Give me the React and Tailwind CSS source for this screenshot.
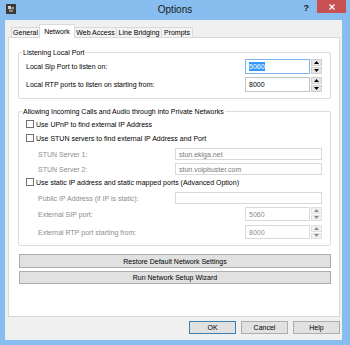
import React from "react";

function Tri({ up, color = "#000" }) {
  return (
    <svg width="5" height="3" viewBox="0 0 5 3" className="block">
      {up ? <polygon points="0,3 5,3 2.5,0" fill={color} /> : <polygon points="0,0 5,0 2.5,3" fill={color} />}
    </svg>
  );
}

function Spin({ value, selected, focused, disabled, h = "h-[15px]" }) {
  return (
    <div className={`flex ${h} w-[77px] shrink-0`}>
      <div
        className={`flex-1 flex items-center pl-[3px] border bg-white ${
          focused ? "border-[#7eb4ea]" : disabled ? "border-[#d9d9d9]" : "border-[#c4c4c4]"
        } ${disabled ? "text-[#8d8d8d]" : "text-black"}`}
      >
        {selected ? <span className="bg-[#3399ff] text-white leading-[9px]">{value}</span> : value}
      </div>
      <div className="w-[11px] ml-px flex flex-col gap-px">
        <div className={`flex-1 flex items-center justify-center border ${disabled ? "border-[#e0e0e0] bg-[#f2f2f2]" : "border-[#cfcfcf] bg-[#e6e6e6]"}`}>
          <Tri up color={disabled ? "#8d8d8d" : "#000"} />
        </div>
        <div className={`flex-1 flex items-center justify-center border ${disabled ? "border-[#e0e0e0] bg-[#f2f2f2]" : "border-[#cfcfcf] bg-[#e6e6e6]"}`}>
          <Tri color={disabled ? "#8d8d8d" : "#000"} />
        </div>
      </div>
    </div>
  );
}

function Check({ label, className = "" }) {
  return (
    <div className={`flex items-center h-[12px] gap-[2px] ${className}`}>
      <div className="w-[8px] h-[8px] border border-[#707070] bg-white" />
      <span>{label}</span>
    </div>
  );
}

function TextInput({ value }) {
  return (
    <div className="w-[147px] h-[12px] border border-[#d9d9d9] bg-white flex items-center pl-[3px] text-[#7a7a7a]">
      {value}
    </div>
  );
}

export default function App() {
  return (
    <div className="w-[350px] h-[345px] bg-[#88bdef] flex flex-col font-['Liberation_Sans',Arial,sans-serif] text-[7px] text-black leading-none overflow-hidden">
      {/* Title bar */}
      <div className="h-[20px] grid grid-cols-[1fr_auto_1fr] items-start shrink-0">
        <div className="pl-[6px] pt-[4px]">
          <svg width="10" height="10" viewBox="0 0 10 10" className="block">
            <rect width="10" height="10" fill="#3b3b3b" />
            <rect x="2" y="2" width="3" height="3" fill="#cfcfcf" />
            <rect x="5.5" y="3" width="2.5" height="2" fill="#9a9a9a" />
            <rect x="3" y="5.5" width="4" height="2.5" fill="#8a8a8a" />
          </svg>
        </div>
        <div className="pt-[5px] text-[10px] text-[#1a1a1a] leading-[10px]">Options</div>
        <div className="flex justify-end items-start">
          <span className="pt-[4px] mr-[8px] text-[9px] font-bold text-[#1a1a1a] leading-[9px]">?</span>
          <div className="w-[29px] h-[13px] mr-[4px] bg-[#c75050] flex items-center justify-center">
            <svg width="6" height="6" viewBox="0 0 6 6" className="block">
              <path d="M0.5 0.5 L5.5 5.5 M5.5 0.5 L0.5 5.5" stroke="#fff" strokeWidth="1.3" />
            </svg>
          </div>
        </div>
      </div>

      {/* Client */}
      <div className="ml-[5px] mr-[8px] h-[320px] bg-[#f0f0f0] pl-[3px] pr-[2px] pt-[4px] flex flex-col">
        {/* Tabs */}
        <div className="h-[13px] flex items-end pl-[3px]">
          <div className="w-[29px] h-[10px] border border-b-0 border-[#d9d9d9] bg-[#f3f3f3] flex items-center justify-center">General</div>
          <div className="w-[36px] h-[14px] -mb-px -ml-px relative z-10 border border-b-0 border-[#d9d9d9] bg-white flex items-center justify-center pb-[1px]">Network</div>
          <div className="w-[43px] h-[10px] -ml-px border border-b-0 border-[#d9d9d9] bg-[#f3f3f3] flex items-center justify-center">Web Access</div>
          <div className="w-[46px] h-[10px] -ml-px border border-b-0 border-[#d9d9d9] bg-[#f3f3f3] flex items-center justify-center">Line Bridging</div>
          <div className="w-[32px] h-[10px] -ml-px border border-b-0 border-[#d9d9d9] bg-[#f3f3f3] flex items-center justify-center">Prompts</div>
        </div>

        {/* Panel */}
        <div className="h-[280px] border border-[#d9d9d9] bg-white pl-[9px] pr-[8px] pt-[10px] flex flex-col">
          <fieldset className="border border-[#dcdcdc] rounded-[2px] pl-[7px] pr-[8px] pt-[2px] pb-[6px] flex flex-col gap-[3px]">
            <legend className="ml-[-4px] px-[1px] leading-[9px]">Listening Local Port</legend>
            <div className="h-[15px] flex items-center justify-between">
              <span>Local Sip Port to listen on:</span>
              <Spin value="5060" selected focused />
            </div>
            <div className="h-[15px] flex items-center justify-between">
              <span>Local RTP ports to listen on starting from:</span>
              <Spin value="8000" />
            </div>
          </fieldset>

          <fieldset className="mt-[8px] border border-[#dcdcdc] rounded-[2px] pl-[7px] pr-[8px] pt-[2px] pb-[6px] flex flex-col">
            <legend className="ml-[-4px] px-[1px] leading-[9px]">Allowing Incoming Calls and Audio through into Private Networks</legend>
            <Check label="Use UPnP to find external IP Address" />
            <Check label="Use STUN servers to find external IP Address and Port" className="mt-[2px]" />
            <div className="mt-[4px] h-[12px] flex items-center justify-between pl-[12px] text-[#8d8d8d]">
              <span>STUN Server 1:</span>
              <TextInput value="stun.ekiga.net" />
            </div>
            <div className="mt-[3px] h-[12px] flex items-center justify-between pl-[12px] text-[#8d8d8d]">
              <span>STUN Server 2:</span>
              <TextInput value="stun.voipbuster.com" />
            </div>
            <Check label="Use static IP address and static mapped ports (Advanced Option)" className="mt-[1px]" />
            <div className="mt-[4px] h-[12px] flex items-center justify-between pl-[12px] text-[#8d8d8d]">
              <span>Public IP Address (if IP is static):</span>
              <TextInput value="" />
            </div>
            <div className="mt-[3px] h-[14px] flex items-center justify-between pl-[12px] text-[#8d8d8d]">
              <span>External SIP port:</span>
              <Spin value="5060" disabled h="h-[14px]" />
            </div>
            <div className="mt-[4px] h-[14px] flex items-center justify-between pl-[12px] text-[#8d8d8d]">
              <span>External RTP port starting from:</span>
              <Spin value="8000" disabled h="h-[14px]" />
            </div>
          </fieldset>

          <button className="mt-[8px] ml-px h-[14px] border border-[#adadad] bg-[#e1e1e1] flex items-center justify-center">
            Restore Default Network Settings
          </button>
          <button className="mt-[3px] ml-px h-[13px] border border-[#adadad] bg-[#e1e1e1] flex items-center justify-center">
            Run Network Setup Wizard
          </button>
        </div>

        {/* Bottom buttons */}
        <div className="mt-[4px] flex justify-end gap-[5px]">
          <button className="w-[47px] h-[13px] border border-[#3c7fb1] bg-[#e1e1e1] flex items-center justify-center">OK</button>
          <button className="w-[47px] h-[13px] border border-[#adadad] bg-[#e1e1e1] flex items-center justify-center">Cancel</button>
          <button className="w-[47px] h-[13px] border border-[#adadad] bg-[#e1e1e1] flex items-center justify-center">Help</button>
        </div>
      </div>
    </div>
  );
}
